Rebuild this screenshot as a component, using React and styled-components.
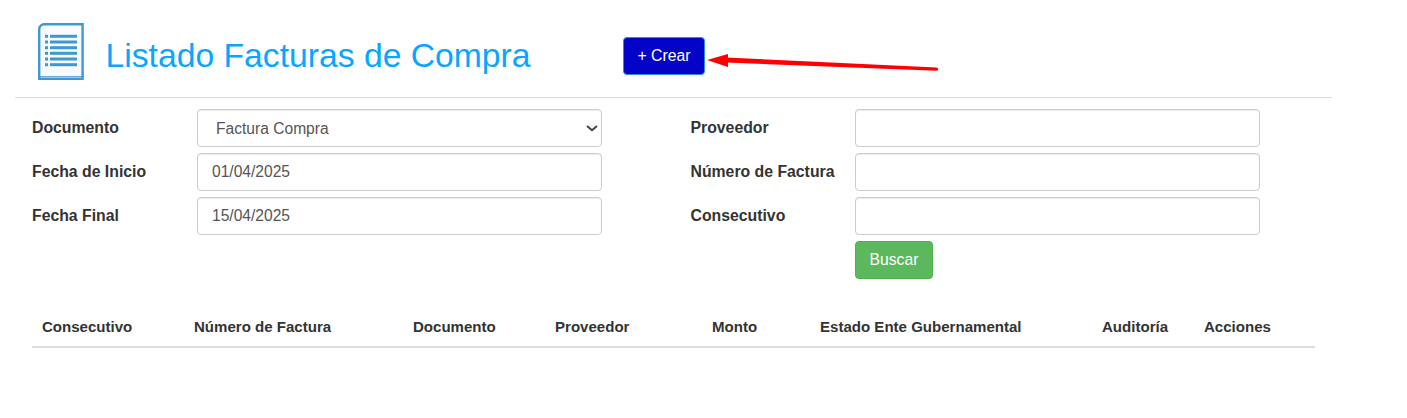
import React from 'react';
import styled, { createGlobalStyle } from 'styled-components';

const GlobalStyle = createGlobalStyle`
  html, body {
    margin: 0;
    background: #fff;
    font-family: "Liberation Sans", Arial, sans-serif;
    color: #333;
  }
`;

const Page = styled.div`
  position: relative;
  width: 1317px;
  height: 418px;
  margin-left: 15px;
  box-sizing: border-box;
`;

const Header = styled.header`
  display: flex;
  align-items: flex-start;
  height: 98px;
  box-sizing: border-box;
  padding: 23px 0 0 23px;
  border-bottom: 1px solid #ddd;
`;

const DocIcon = styled.svg`
  width: 46px;
  height: 57px;
  flex: none;
`;

const Title = styled.h1`
  margin: 11px 0 0 21.5px;
  width: 517.5px;
  font-size: 33.7px;
  line-height: 42px;
  font-weight: 400;
  color: #0aa5ff;
`;

const CreateButton = styled.button`
  width: 82px;
  height: 38px;
  margin-top: 14px;
  padding: 0;
  border: 1px solid #2e8fd0;
  border-radius: 4px;
  background: #0404c8;
  color: #fff;
  font: 15.8px "Liberation Sans", Arial, sans-serif;
`;

const Arrow = styled.svg`
  position: absolute;
  left: 691px;
  top: 45px;
  width: 240px;
  height: 34px;
`;

const Filters = styled.form`
  display: grid;
  grid-template-columns: 165px 405px 253px 405px;
  row-gap: 6px;
  padding: 11px 0 0 17px;
  & > :nth-child(4n + 3) {
    padding-left: 88.5px;
  }
`;

const FieldLabel = styled.label`
  display: flex;
  align-items: center;
  height: 38px;
  box-sizing: border-box;
  font-size: 15.8px;
  font-weight: 700;
  white-space: nowrap;
`;

const Spacer = styled.div``;

const TextInput = styled.input`
  width: 405px;
  height: 38px;
  box-sizing: border-box;
  padding: 6px 14px;
  border: 1px solid #ccc;
  border-radius: 4px;
  background: #fff;
  box-shadow: inset 0 1px 1px rgba(0, 0, 0, 0.075);
  color: #555;
  font: 15.6px "Liberation Sans", Arial, sans-serif;
`;

const chevron = `url("data:image/svg+xml,%3Csvg xmlns='http://www.w3.org/2000/svg' width='12' height='7'%3E%3Cpath d='M1 1l5 4.2L11 1' fill='none' stroke='%23444' stroke-width='2'/%3E%3C/svg%3E")`;

const SelectInput = styled.select`
  width: 405px;
  height: 38px;
  box-sizing: border-box;
  padding: 6px 14px 6px 18px;
  border: 1px solid #ccc;
  border-radius: 4px;
  appearance: none;
  background: #fff ${chevron} no-repeat 388px 15px;
  box-shadow: inset 0 1px 1px rgba(0, 0, 0, 0.075);
  color: #555;
  font: 15.6px "Liberation Sans", Arial, sans-serif;
`;

const SearchButton = styled.button`
  justify-self: start;
  width: 78px;
  height: 38px;
  padding: 0;
  border: 1px solid #4cae4c;
  border-radius: 4px;
  background: #5cb85c;
  color: #fff;
  font: 15.7px "Liberation Sans", Arial, sans-serif;
`;

const Table = styled.table`
  width: 1283px;
  margin: 28px 0 0 17px;
  border-collapse: collapse;
  table-layout: fixed;
`;

const HeadCell = styled.th`
  height: 40px;
  box-sizing: border-box;
  padding: 0 0 0 10px;
  border-bottom: 2px solid #ddd;
  font-size: 15.05px;
  font-weight: 700;
  text-align: left;
  white-space: nowrap;
`;

const columns = [
  ['Consecutivo', 152],
  ['Número de Factura', 219],
  ['Documento', 142],
  ['Proveedor', 157],
  ['Monto', 108],
  ['Estado Ente Gubernamental', 282],
  ['Auditoría', 102],
  ['Acciones', 121],
];

const rows = [
  [['Documento'], ['select', 'Factura Compra'], ['Proveedor'], ['input', '']],
  [['Fecha de Inicio'], ['input', '01/04/2025'], ['Número de Factura'], ['input', '']],
  [['Fecha Final'], ['input', '15/04/2025'], ['Consecutivo'], ['input', '']],
];

const renderCell = ([kind, value], key) => {
  if (kind === 'select') {
    return (
      <SelectInput key={key} defaultValue={value}>
        <option>{value}</option>
      </SelectInput>
    );
  }
  if (kind === 'input') return <TextInput key={key} defaultValue={value} />;
  return <FieldLabel key={key}>{kind}</FieldLabel>;
};

const App = () => (
  <Page>
    <GlobalStyle />
    <Header>
      <DocIcon viewBox="0 0 46 57">
        <path d="M1.2 55.8V6.5a5 5 0 0 1 5-5.3h38.4v54.6z" fill="#f7fbfe" stroke="#3f97d3" strokeWidth="2.4" />
        <path d="M1 53.5h44" stroke="#3f97d3" strokeWidth="0.8" />
        {[13.3, 19, 24.7, 30.3, 36, 41.7].map((y) => (
          <g key={y} fill="#3f97d3">
            <rect x="7" y={y - 1.5} width="3" height="3" />
            <rect x="12" y={y - 1.5} width="27" height="3" />
          </g>
        ))}
      </DocIcon>
      <Title>Listado Facturas de Compra</Title>
      <CreateButton type="button">+ Crear</CreateButton>
    </Header>
    <Arrow viewBox="0 0 240 34">
      <path d="M20 12.5L230.5 22.6a1.6 1.6 0 0 1 0 3.2L20 17.5z" fill="#f00" />
      <path d="M22 9L1 15l21 7z" fill="#f00" />
    </Arrow>
    <Filters>
      {rows.map((row, i) => row.map((cell, j) => renderCell(cell, `${i}-${j}`)))}
      <Spacer />
      <Spacer />
      <Spacer />
      <SearchButton type="button">Buscar</SearchButton>
    </Filters>
    <Table>
      <colgroup>
        {columns.map(([name, width]) => (
          <col key={name} width={width} />
        ))}
      </colgroup>
      <thead>
        <tr>
          {columns.map(([name]) => (
            <HeadCell key={name}>{name}</HeadCell>
          ))}
        </tr>
      </thead>
    </Table>
  </Page>
);

export default App;
